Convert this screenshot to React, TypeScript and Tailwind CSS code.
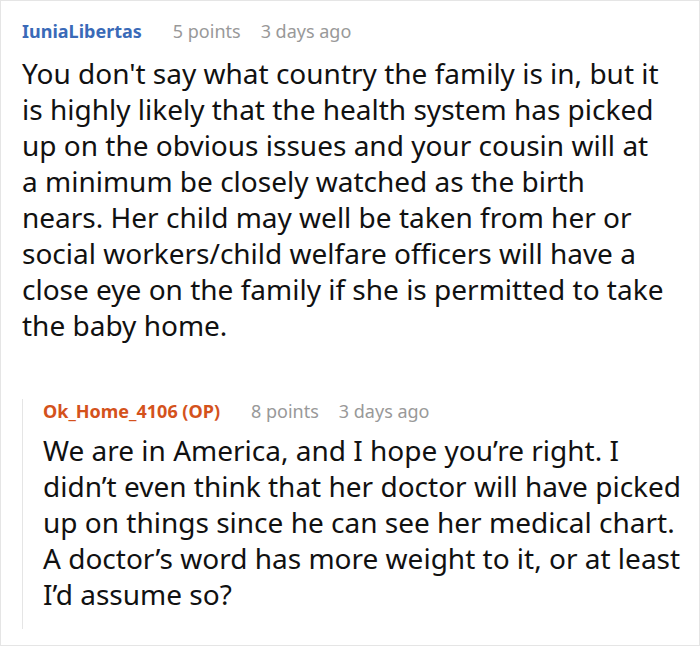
const font = { fontFamily: '"Noto Sans", "Open Sans", sans-serif' };

const firstLines = [
  "You don't say what country the family is in, but it",
  'is highly likely that the health system has picked',
  'up on the obvious issues and your cousin will at',
  'a minimum be closely watched as the birth',
  'nears. Her child may well be taken from her or',
  'social workers/child welfare officers will have a',
  'close eye on the family if she is permitted to take',
  'the baby home.',
];

function Meta({ name, nameClass, points, ago }: { name: string; nameClass: string; points: string; ago: string }) {
  return (
    <div className="flex items-baseline gap-[31px] text-[18px] leading-[24px]">
      <span className={`font-bold ${nameClass}`}>{name}</span>
      <span className="flex gap-[20px] text-[#999999]">
        <span>{points}</span>
        <span>{ago}</span>
      </span>
    </div>
  );
}

export default function App() {
  return (
    <div style={font} className="w-[700px] h-[646px] bg-white border border-[#e5e5e5] pl-[21px] pr-[10px] pt-[18px]">
      <Meta name="IuniaLibertas" nameClass="text-[#3a6ab8]" points="5 points" ago="3 days ago" />
      <p className="mt-[12px] text-[28px] leading-[36px] text-[#111111] whitespace-nowrap">
        {firstLines.map((l, i) => (
          <span key={i} className="block">{l}</span>
        ))}
      </p>
      {/* reply: the rule starts a little below the top of the meta line */}
      <div className="mt-[65px] border-l border-[#e5e5e5] pl-[20px] pb-[17px]">
        <div className="-mt-[9px]">
          <Meta name="Ok_Home_4106 (OP)" nameClass="text-[#d4521c]" points="8 points" ago="3 days ago" />
        </div>
        <p className="mt-[9px] text-[28px] leading-[36px] text-[#111111]">
          We are in America, and I hope you’re right. I didn’t even think that her doctor will have picked up on things
          since he can see her medical chart. A doctor’s word has more weight to it, or at least I’d assume so?
        </p>
      </div>
    </div>
  );
}
